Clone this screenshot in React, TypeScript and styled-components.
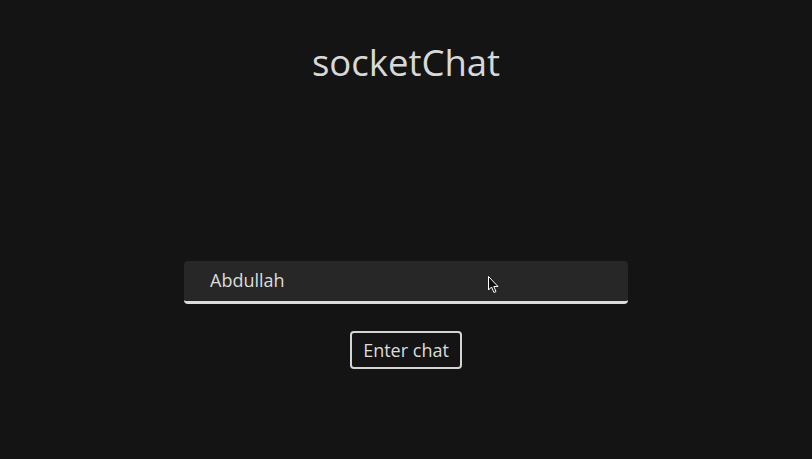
import React from "react";
import styled, { createGlobalStyle } from "styled-components";

const Global = createGlobalStyle`
  html, body { margin: 0; padding: 0; background: #141414; }
  body { font-family: "Open Sans", "Noto Sans", sans-serif; color: #dcdcdc; }
`;

const Page = styled.div`
  position: relative;
  height: 459px;
  display: flex;
  flex-direction: column;
  align-items: center;
`;

const Title = styled.h1`
  margin: 38px 0 0;
  font-size: 36.5px;
  font-weight: 400;
  line-height: 48px;
  color: #d8d8d8;
`;

const Form = styled.form`
  margin-top: 175px;
  display: flex;
  flex-direction: column;
  align-items: center;
`;

const Input = styled.input`
  box-sizing: border-box;
  width: 444px;
  height: 43px;
  padding: 0 26px 3px 26px;
  background: #272727;
  border: none;
  border-bottom: 3px solid #dcdcdc;
  border-radius: 4px;
  color: #dcdcdc;
  font-family: inherit;
  font-size: 18px;
  outline: none;
`;

const Button = styled.button`
  margin-top: 27px;
  box-sizing: border-box;
  width: 112px;
  height: 38px;
  background: transparent;
  border: 2px solid #d4d4d4;
  border-radius: 4px;
  color: #dcdcdc;
  font-family: inherit;
  font-size: 18px;
  padding: 0 0 1px;
`;

const Cursor = styled.svg`
  position: absolute;
  left: 487px;
  top: 275px;
`;

export default function App() {
  return (
    <>
      <Global />
      <Page>
        <Title>socketChat</Title>
        <Form onSubmit={(e) => e.preventDefault()}>
          <Input defaultValue="Abdullah" />
          <Button type="submit">Enter chat</Button>
        </Form>
        <Cursor width="14" height="20" viewBox="0 0 14 20">
          <path d="M1.5 1.5 L1.5 15 L4.5 12 L7 17.5 L9 16.5 L6.8 11.5 L11 11.5 Z" fill="#111" stroke="#fff" strokeWidth="1" />
        </Cursor>
      </Page>
    </>
  );
}
